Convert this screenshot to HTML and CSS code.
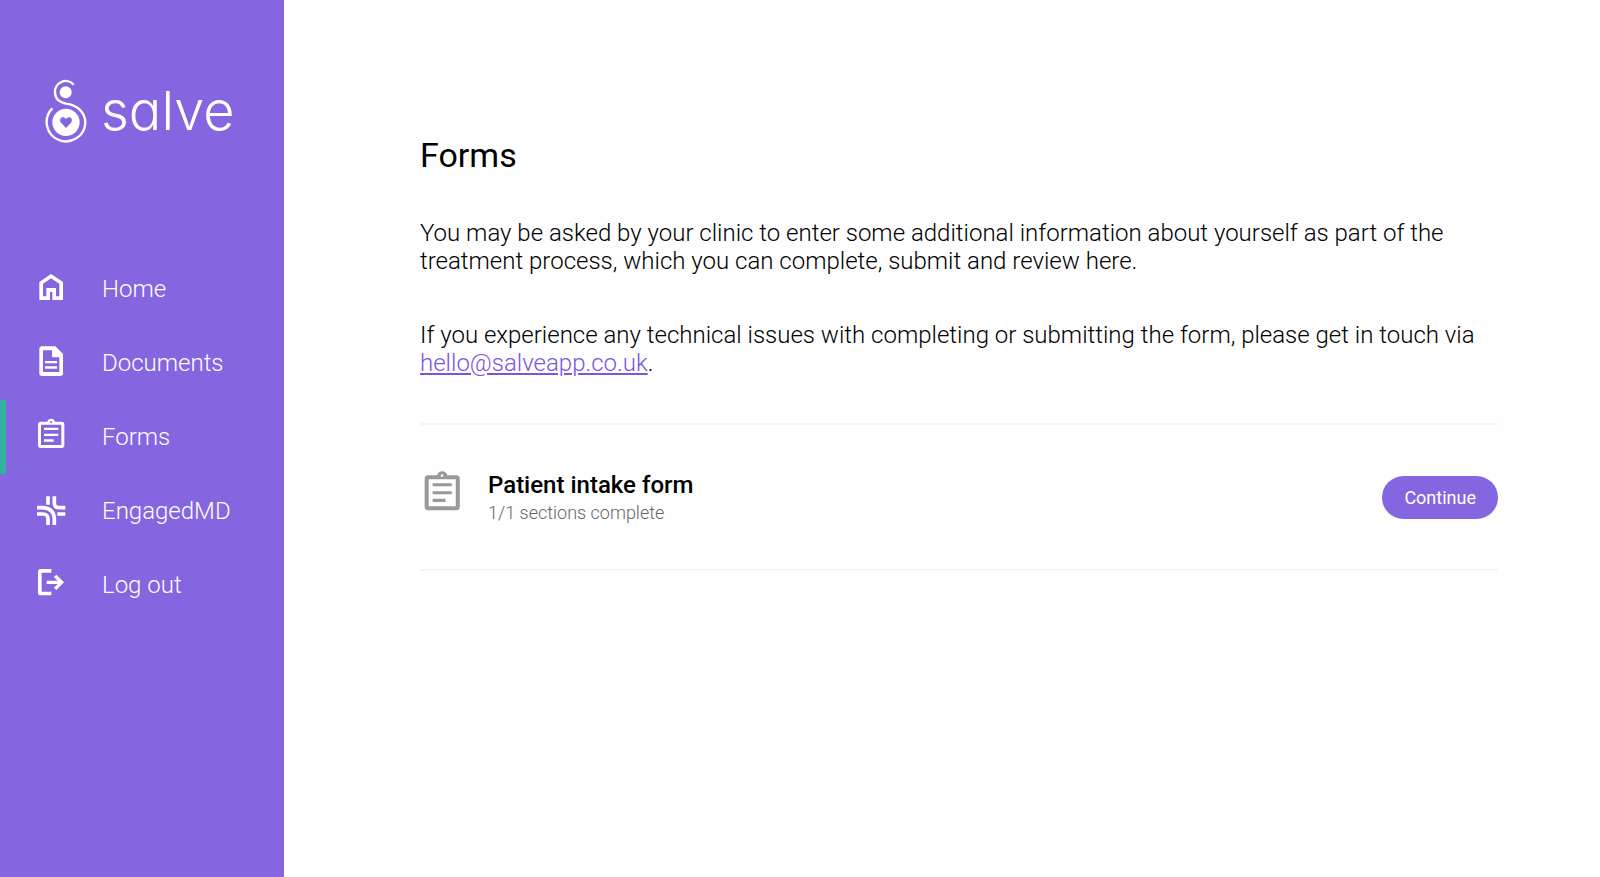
FILE: index.html
```html
<!DOCTYPE html>
<html lang="en">

<head>
    <meta charset="UTF-8">
    <meta name="viewport" content="width=device-width, initial-scale=1.0">
    <title>Salve - Forms</title>
    <link rel="stylesheet" href="styles.css">
</head>

<body>

    <!-- Clipboard icon, used in the menu and in the form list -->
    <svg class="sprite" aria-hidden="true">
        <symbol id="clipboard" viewBox="0 0 90 90" overflow="visible">
            <path fill-rule="evenodd" d="M34 5C36 -7 55 -7 57 5H77a8 8 0 0 1 8 8V76a8 8 0 0 1-8 8H14a8 8 0 0 1-8-8V13a8 8 0 0 1 8-8ZM15 14V75H76V14ZM45 3a3 3 0 1 0 .1 0Z"/>
            <path d="M24 23H67V30H24ZM24 41H67V48H24ZM24 58H53V65H24Z"/>
        </symbol>
    </svg>

    <div class="layout">
        <!-- Sidebar -->
        <aside class="sidebar">
            <a href="#" class="logo">
                <svg class="logo-mark" viewBox="42 56 129 192" aria-hidden="true">
                    <path class="logo-line" d="M131 73A32 32 0 0 0 75 96C75 118 88 126 108 130C142 134 166 156 166 187A58 58 0 1 1 67 144"/>
                    <circle cx="107" cy="96" r="18"/>
                    <circle cx="108" cy="186" r="41"/>
                    <path class="logo-heart" d="M108 203L93 187C84 174 99 164 108 176C117 164 132 174 123 187Z"/>
                </svg>
                <span class="logo-text">salve</span>
            </a>

            <nav class="menu">
                <a href="#" class="menu-item">
                    <svg class="menu-icon" viewBox="0 0 90 90" aria-hidden="true">
                        <path fill-rule="evenodd" d="M10 84V30L45 6L81 30V84H49V60H42V84ZM21 73H31V48H60V73H70V35L45 19L21 35Z"/>
                    </svg>
                    Home
                </a>
                <a href="#" class="menu-item">
                    <svg class="menu-icon" viewBox="0 0 90 90" aria-hidden="true">
                        <path fill-rule="evenodd" d="M18 1H58L81 24V82a8 8 0 0 1-8 8H18a8 8 0 0 1-8-8V9a8 8 0 0 1 8-8ZM21 13V78H70V34H48V13Z"/>
                        <path d="M27 45H63V52H27ZM27 61H63V68H27Z"/>
                    </svg>
                    Documents
                </a>
                <a href="#" class="menu-item active">
                    <svg class="menu-icon" aria-hidden="true"><use href="#clipboard"/></svg>
                    Forms
                </a>
                <a href="#" class="menu-item">
                    <svg class="menu-icon icon-stroke" viewBox="0 0 90 90" aria-hidden="true">
                        <path d="M36 7V32M55 7V26Q55 41 70 41H88M3 41H20Q55 43 55 75V93M3 60H20Q36 60 36 75V93M64 60H88"/>
                    </svg>
                    EngagedMD
                </a>
                <a href="#" class="menu-item">
                    <svg class="menu-icon" viewBox="0 0 90 90" aria-hidden="true">
                        <path d="M46 3V14H17V71H46V82H14a8 8 0 0 1-8-8V11a8 8 0 0 1 8-8Z"/>
                        <path d="M32 38H65L54 27L61 20L84 43L61 66L54 59L65 48H32Z"/>
                    </svg>
                    Log out
                </a>
            </nav>
        </aside>

        <!-- Content -->
        <main class="content">
            <h1>Forms</h1>

            <p>You may be asked by your clinic to enter some additional information about yourself as part of the<br>
                treatment process, which you can complete, submit and review here.</p>

            <p>If you experience any technical issues with completing or submitting the form, please get in touch via<br>
                <a href="mailto:hello@salveapp.co.uk">hello@salveapp.co.uk</a>.</p>

            <ul class="form-list">
                <li class="form-row">
                    <svg class="form-icon" aria-hidden="true"><use href="#clipboard"/></svg>
                    <div class="form-info">
                        <h2>Patient intake form</h2>
                        <span class="form-status">1/1 sections complete</span>
                    </div>
                    <button type="button" class="btn">Continue</button>
                </li>
            </ul>
        </main>
    </div>

</body>

</html>
```

FILE: styles.css
```css
* {
    box-sizing: border-box;
}

body {
    font-family: Roboto, sans-serif;
    font-weight: 300;
    margin: 0;
    background: #fefefe;
    color: #000;
}

.sprite {
    position: absolute;
    width: 0;
    height: 0;
}

.layout {
    display: flex;
    min-height: 100vh;
}

/* Sidebar */
.sidebar {
    flex: 0 0 284px;
    background: #8566e0;
    padding-top: 80px;
}

.logo {
    display: flex;
    align-items: center;
    gap: 14px;
    height: 62px;
    margin: 0 0 110px 44px;
    color: #fff;
    text-decoration: none;
}

.logo-mark {
    width: 43px;
    height: 64px;
    fill: #fff;
}

.logo-line {
    fill: none;
    stroke: #fff;
    stroke-width: 7;
}

.logo-heart {
    fill: #8566e0;
}

.logo-text {
    font-family: Inter, sans-serif;
    font-feature-settings: "cv11";
    font-size: 54px;
    line-height: 62px;
}

.menu-item {
    display: flex;
    align-items: center;
    gap: 36px;
    height: 74px;
    padding-left: 30px;
    border-left: 6px solid transparent;
    color: #fff;
    font-size: 24px;
    text-decoration: none;
}

.menu-item.active {
    border-left-color: #34b0a0;
}

.menu-icon {
    width: 30px;
    height: 30px;
    margin-bottom: 4px;
    fill: #fff;
    overflow: visible;
}

.icon-stroke {
    fill: none;
    stroke: #fff;
    stroke-width: 11;
}

/* Content */
.content {
    flex: 1;
    padding: 135px 102px 60px 136px;
}

h1 {
    margin: 0 0 44px;
    font-size: 34px;
    font-weight: 400;
    line-height: 40px;
}

p {
    margin: 0 0 46px;
    font-size: 24px;
    line-height: 28px;
}

p a {
    color: #7a55e0;
}

/* Form list */
.form-list {
    list-style: none;
    margin: 0;
    padding: 0;
    border-top: 2px solid #f4f4f4;
}

.form-row {
    display: flex;
    align-items: center;
    height: 146px;
    border-bottom: 2px solid #f4f4f4;
}

.form-icon {
    width: 40px;
    height: 40px;
    margin: 0 26px 8px 2px;
    fill: #999;
    overflow: visible;
}

.form-info {
    flex: 1;
}

h2 {
    margin: 0;
    font-size: 24px;
    font-weight: 500;
    line-height: 32px;
}

.form-status {
    color: #666;
    font-size: 18px;
    line-height: 24px;
}

.btn {
    height: 43px;
    padding: 0 22px;
    border: none;
    border-radius: 22px;
    background: #8566e0;
    color: #fff;
    font: inherit;
    font-size: 18px;
    font-weight: 400;
    cursor: pointer;
}
```
